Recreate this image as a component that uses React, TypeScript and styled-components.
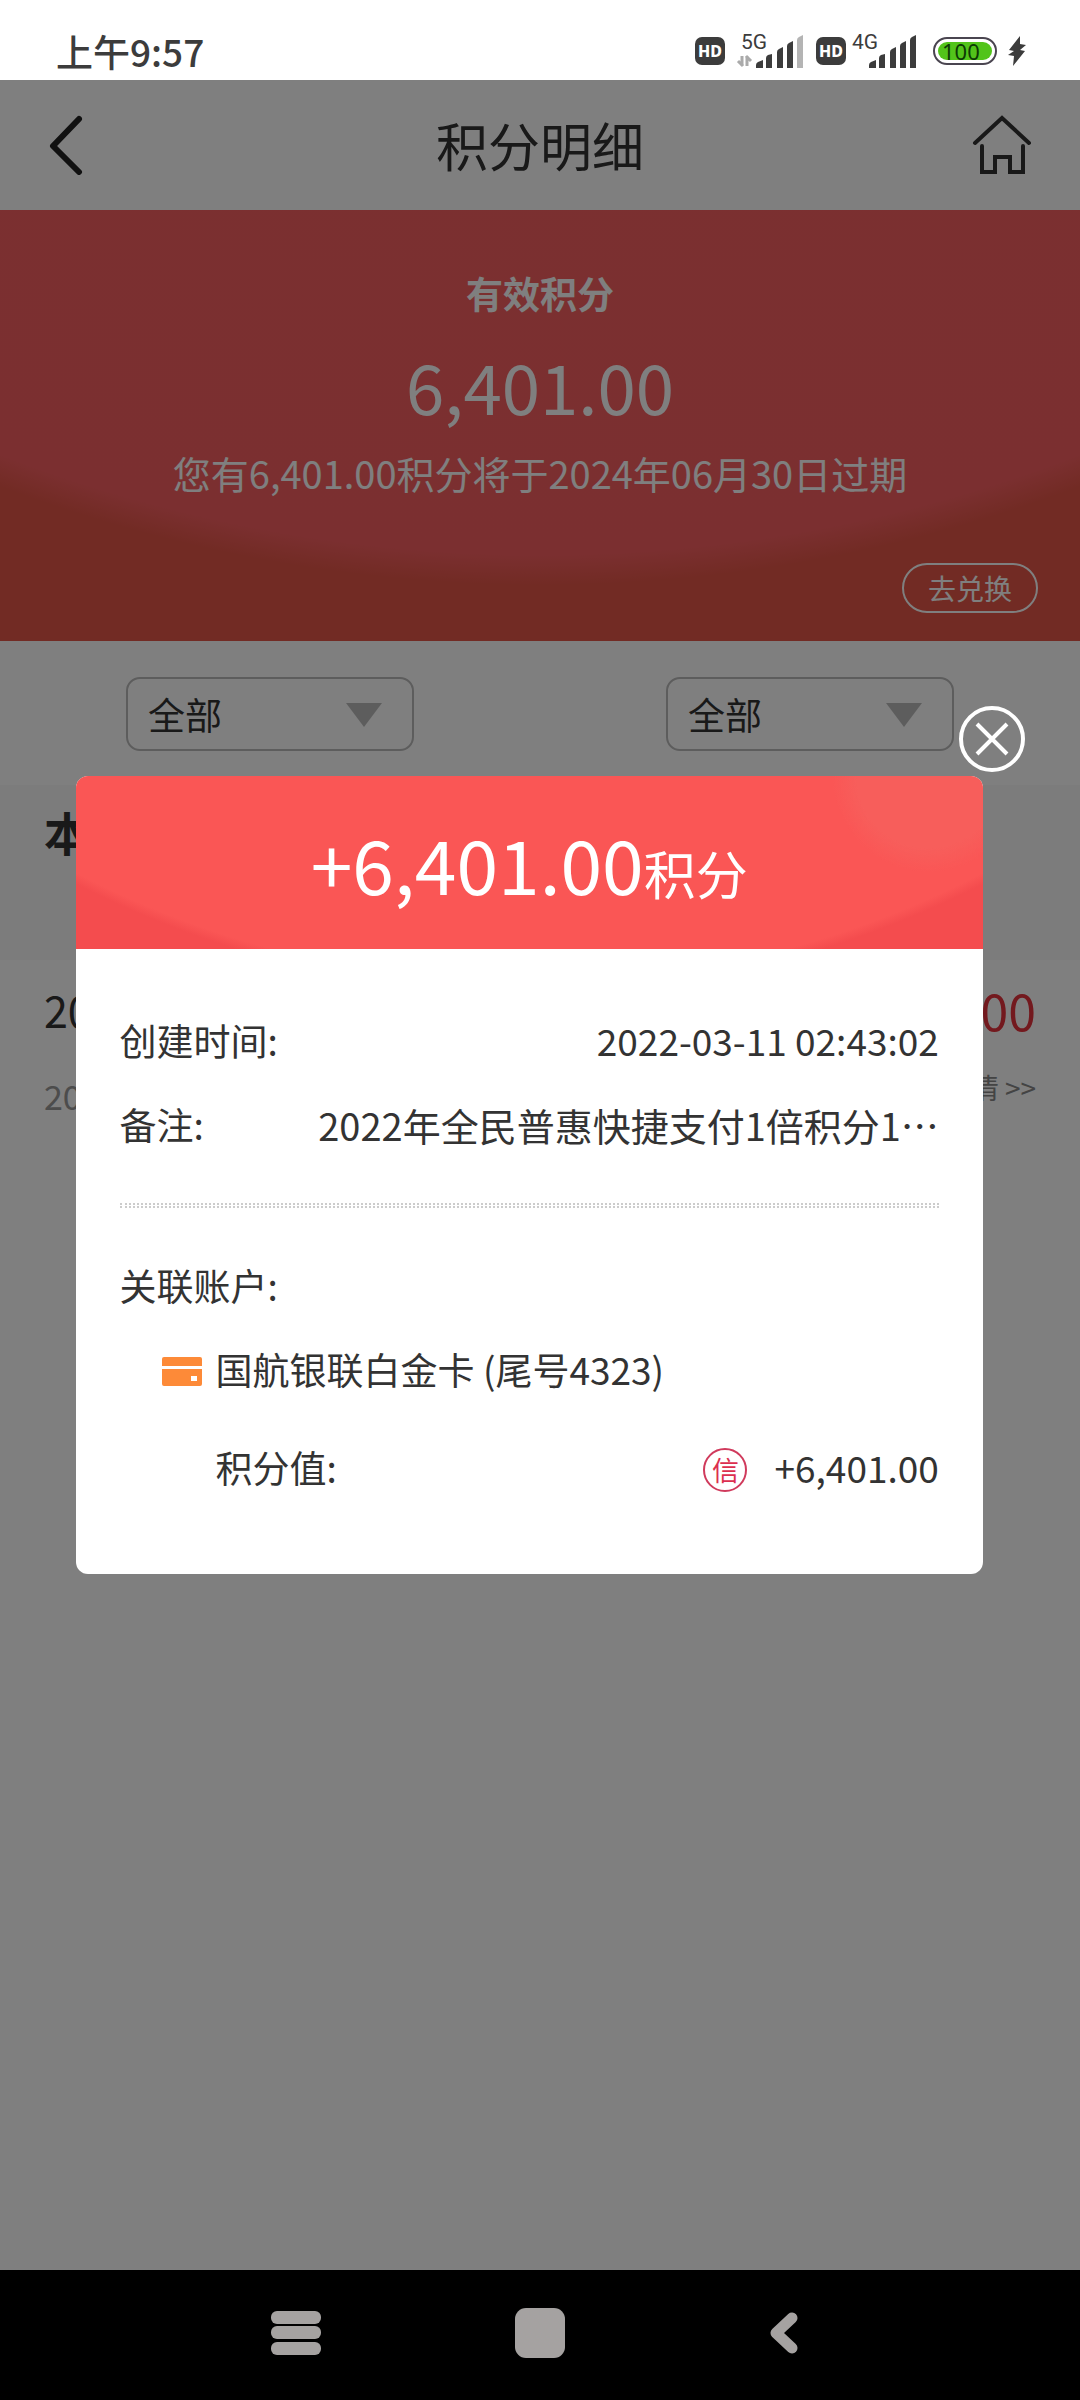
import React from 'react';
import styled, { createGlobalStyle } from 'styled-components';

const GlobalStyle = createGlobalStyle`
  *, *::before, *::after { box-sizing: border-box; }
  body {
    margin: 0;
    background: #000;
    color: #333;
    font-family: "Noto Sans CJK SC", "Noto Sans", sans-serif;
    font-size: 37px;
  }
  h1, h2, p, dl, dd { margin: 0; font-weight: 400; }
  button, select { font-family: inherit; color: inherit; }
  button { padding: 0; border: 0; background: none; }
  svg { display: block; }
`;

const Screen = styled.div`
  display: flex;
  flex-direction: column;
  min-height: 100vh;
`;

/* ---------- system status bar ---------- */

const StatusBar = styled.div`
  display: flex;
  align-items: center;
  justify-content: space-between;
  height: 80px;
  padding: 22px 54px 0 56px;
  background: #fff;
  color: #3c3c3c;
`;

const Clock = styled.time`
  font-weight: 500;
  line-height: 56px;
`;

const StatusIcons = styled.div`
  display: flex;
  align-items: center;
`;

const HdBadge = styled.span`
  display: flex;
  align-items: center;
  justify-content: center;
  width: 30px;
  height: 28px;
  border-radius: 7px;
  background: #3c3c3c;
  color: #fff;
  font: 800 16px/28px "Noto Sans", sans-serif;
`;

const Signal = styled.svg<{ $lead: number }>`
  margin: 0 12px 0 ${(p) => p.$lead}px;
`;

const Battery = styled.span`
  display: flex;
  padding: 3px;
  width: 64px;
  height: 28px;
  margin: 0 11px 0 4px;
  border: 2px solid #4a4550;
  border-radius: 14px;
`;

const Charge = styled.span`
  flex: 1;
  padding-left: 4px;
  border-radius: 9px;
  background: #52c41a;
  color: #0d3a05;
  font: 400 22px/18px "Noto Sans", sans-serif;
`;

function SignalIcon({ label, weakLast }: { label: string; weakLast?: boolean }) {
  return (
    <Signal $lead={weakLast ? 11 : 3} width="68" height="52" viewBox="0 -8 68 52" aria-label={label}>
      <text x={weakLast ? 5 : 3} y="16" fontSize="21" fontFamily="Roboto, sans-serif" fill="#3c3c3c">
        {label}
      </text>
      {weakLast && (
        <path d="M6 23v10M7 33l-5-5M11 33V23M10 23l5 5" stroke="#aaa" strokeWidth="3" fill="none" />
      )}
      <g fill="#3c3c3c">
        <path d="M20 35v-3q0-2 2-3l5-2v8z" />
        <path d="M30 35V25q0-2 2-3l4-1v14z" />
        <path d="M41 35V19q0-2 2-3l4-2v21z" />
        <path d="M51 35V13q0-2 2-3l4-2v27z" />
        <path d="M61 35V7q0-2 2-3l4-2v33z" fill={weakLast ? '#b4b4b4' : '#3c3c3c'} />
      </g>
    </Signal>
  );
}

/* ---------- page ---------- */

const Stage = styled.div`
  position: relative;
  flex: 1;
  background: #fff;
`;

const TopBar = styled.header`
  display: flex;
  align-items: center;
  justify-content: space-between;
  height: 130px;
  padding: 0 48px;
`;

const PageTitle = styled.h1`
  font-size: 52px;
  line-height: 76px;
`;

const IconButton = styled.button<{ $end?: boolean }>`
  display: flex;
  justify-content: ${(p) => (p.$end ? 'flex-end' : 'flex-start')};
  width: 60px;
`;

const Hero = styled.section`
  display: flex;
  flex-direction: column;
  align-items: center;
  padding: 55px 42px 28px;
  background: radial-gradient(circle 1532px at 50% -1156px, #f96264 0, #f65f60 98%, #e45648 100%);
  color: #fff;
`;

const HeroLabel = styled.h2`
  font-size: 37px;
  font-weight: 700;
  line-height: 56px;
`;

const HeroValue = styled.p`
  margin: 14px 0 10px;
  font-size: 69px;
  line-height: 100px;
`;

const HeroNote = styled.p`
  font-size: 38px;
  line-height: 56px;
`;

const RedeemButton = styled.button`
  align-self: flex-end;
  width: 136px;
  height: 50px;
  margin-top: 62px;
  border: 2px solid #fff;
  border-radius: 25px;
  font-size: 28px;
  line-height: 44px;
`;

const Filters = styled.div`
  display: grid;
  grid-template-columns: 1fr 1fr;
  justify-items: center;
  padding: 36px 0 34px;
`;

const FilterBox = styled.label`
  position: relative;
  width: 288px;
`;

const FilterSelect = styled.select`
  width: 100%;
  height: 74px;
  padding: 0 20px;
  border: 2px solid #bbb;
  border-radius: 14px;
  background: transparent;
  font-size: 37px;
  appearance: none;
`;

const Caret = styled.svg`
  position: absolute;
  top: 26px;
  right: 32px;
  pointer-events: none;
`;

const MonthBand = styled.div`
  min-height: 175px;
  padding: 16px 44px;
  background: #f8f8f8;
  font-size: 46px;
  font-weight: 700;
  line-height: 60px;
`;

const Entry = styled.article`
  display: flex;
  justify-content: space-between;
  padding: 19px 44px;
`;

const EntryColumn = styled.div<{ $gap: number }>`
  display: flex;
  flex-direction: column;
  gap: ${(p) => p.$gap}px;
`;

const EntryTitle = styled.p`
  font-size: 43px;
  line-height: 60px;
`;

const EntryDate = styled.time`
  color: #999;
  font-size: 34px;
  line-height: 48px;
`;

const EntryAmount = styled.p`
  color: #e6323c;
  font-size: 50px;
  line-height: 60px;
  text-align: right;
`;

const EntryLink = styled.a`
  color: #888;
  font-size: 28px;
  line-height: 48px;
  text-align: right;
  text-decoration: none;
`;

/* ---------- dialog ---------- */

const Overlay = styled.div`
  position: absolute;
  inset: 0;
  display: flex;
  align-items: center;
  padding: 0 9% 0 7%;
  background: rgba(0, 0, 0, 0.5);
`;

const Dialog = styled.section`
  position: relative;
  width: 100%;
  border-radius: 12px;
  background: #fff;
`;

const DialogHead = styled.header`
  display: flex;
  align-items: baseline;
  justify-content: center;
  height: 173px;
  padding-top: 32px;
  border-radius: 12px 12px 0 0;
  background:
    radial-gradient(circle 96px at 94% 0, #f75e5b 0, #f75e5b 75%, transparent 100%),
    radial-gradient(circle 998px at 50% -781px, #fa5655 0, #fa5655 99%, #f44c4e 100%);
  color: #fff;
`;

const DialogValue = styled.span`
  font-size: 75px;
  line-height: 110px;
`;

const DialogUnit = styled.span`
  font-size: 52px;
`;

const CloseButton = styled.button`
  position: absolute;
  top: -72px;
  right: -44px;
`;

const DialogBody = styled.div`
  padding: 49px 44px 51px;
`;

const Row = styled.div<{ $indent?: number; $height?: number }>`
  display: flex;
  align-items: center;
  justify-content: space-between;
  height: ${(p) => p.$height ?? 84}px;
  padding-left: ${(p) => p.$indent ?? 0}px;
`;

const Remark = styled.dd`
  font-size: 38px;
`;

const Divider = styled.hr`
  height: 5px;
  margin: 37px 0 35px;
  border: 0;
  border-top: 2px dotted #ccc;
  border-bottom: 2px dotted #ccc;
`;

const CardLine = styled.span`
  display: flex;
  align-items: center;
  gap: 14px;
`;

const CardIcon = styled.svg`
  margin-top: 5px;
`;

const PointValue = styled.dd`
  display: flex;
  align-items: center;
  gap: 27px;
`;

const CreditMark = styled.span`
  display: flex;
  align-items: center;
  justify-content: center;
  width: 44px;
  height: 44px;
  margin-top: 5px;
  border: 2px solid #d03a5c;
  border-radius: 50%;
  color: #dc2f4f;
  font-size: 27px;
  line-height: 38px;
`;

/* ---------- system navigation ---------- */

const NavBar = styled.nav`
  display: flex;
  align-items: center;
  justify-content: center;
  gap: 184px;
  height: 130px;
  padding-bottom: 4px;
  background: #000;
`;

const NavButton = styled.button`
  display: flex;
  justify-content: center;
  width: 60px;
`;

function Filter({ label }: { label: string }) {
  return (
    <FilterBox>
      <FilterSelect aria-label={label} defaultValue="all">
        <option value="all">全部</option>
      </FilterSelect>
      <Caret width="36" height="24" viewBox="0 0 36 24">
        <path d="M0 0h36L18 24z" fill="#bbb" />
      </Caret>
    </FilterBox>
  );
}

export default function App() {
  return (
    <Screen>
      <GlobalStyle />
      <StatusBar>
        <Clock>上午9:57</Clock>
        <StatusIcons>
          <HdBadge>HD</HdBadge>
          <SignalIcon label="5G" weakLast />
          <HdBadge>HD</HdBadge>
          <SignalIcon label="4G" />
          <Battery>
            <Charge>100</Charge>
          </Battery>
          <svg width="18" height="30" viewBox="0 0 18 30">
            <path d="M12 0L1 14l5 1-6 4 6 1-1 10L17 15l-5-1 6-5-6-1z" fill="#3c3c3c" />
          </svg>
        </StatusIcons>
      </StatusBar>

      <Stage>
        <TopBar>
          <IconButton aria-label="返回">
            <svg width="36" height="60" viewBox="0 0 36 60" fill="none" stroke="#222" strokeWidth="6" strokeLinecap="round" strokeLinejoin="round">
              <path d="M31 4L5 31l26 26" />
            </svg>
          </IconButton>
          <PageTitle>积分明细</PageTitle>
          <IconButton $end aria-label="首页">
            <svg width="60" height="60" viewBox="0 0 60 60" fill="none" stroke="#333" strokeWidth="4" strokeLinecap="round">
              <path d="M3 28L30 3l27 25" />
              <path d="M10 31v26h13V42h15v15h13V31" />
            </svg>
          </IconButton>
        </TopBar>

        <Hero>
          <HeroLabel>有效积分</HeroLabel>
          <HeroValue>6,401.00</HeroValue>
          <HeroNote>您有6,401.00积分将于2024年06月30日过期</HeroNote>
          <RedeemButton>去兑换</RedeemButton>
        </Hero>

        <Filters>
          <Filter label="账户" />
          <Filter label="类型" />
        </Filters>

        <MonthBand>本</MonthBand>
        <Entry>
          <EntryColumn $gap={33}>
            <EntryTitle>20</EntryTitle>
            <EntryDate>20</EntryDate>
          </EntryColumn>
          <EntryColumn $gap={24}>
            <EntryAmount>00</EntryAmount>
            <EntryLink href="#detail">情 &gt;&gt;</EntryLink>
          </EntryColumn>
        </Entry>

        <Overlay>
          <Dialog role="dialog" aria-modal="true">
            <CloseButton aria-label="关闭">
              <svg width="70" height="70" viewBox="0 0 70 70" fill="none" stroke="#fff" strokeWidth="4">
                <circle cx="35" cy="35" r="31" />
                <path d="M20 20l30 30M50 20L20 50" />
              </svg>
            </CloseButton>
            <DialogHead>
              <DialogValue>+6,401.00</DialogValue>
              <DialogUnit>积分</DialogUnit>
            </DialogHead>
            <DialogBody>
              <dl>
                <Row>
                  <dt>创建时间:</dt>
                  <dd>2022-03-11 02:43:02</dd>
                </Row>
                <Row>
                  <dt>备注:</dt>
                  <Remark>2022年全民普惠快捷支付1倍积分1…</Remark>
                </Row>
              </dl>
              <Divider />
              <Row>关联账户:</Row>
              <Row $indent={42}>
                <CardLine>
                  <CardIcon width="40" height="30" viewBox="0 0 40 30">
                    <path d="M2 0h36q2 0 2 2v7H0V2q0-2 2-2z" fill="#fd8a38" />
                    <path fillRule="evenodd" d="M0 12h40v15q0 2-2 2H2q-2 0-2-2zM29 19v5h6v-5z" fill="#fd8a38" />
                  </CardIcon>
                  国航银联白金卡 (尾号4323)
                </CardLine>
              </Row>
              <dl>
                <Row $indent={96} $height={112}>
                  <dt>积分值:</dt>
                  <PointValue>
                    <CreditMark>信</CreditMark>
                    +6,401.00
                  </PointValue>
                </Row>
              </dl>
            </DialogBody>
          </Dialog>
        </Overlay>
      </Stage>

      <NavBar>
        <NavButton aria-label="最近任务">
          <svg width="50" height="44" viewBox="0 0 50 44" fill="#a5a2a1">
            <rect width="50" height="13" rx="6" />
            <rect y="15" width="50" height="13" rx="6" />
            <rect y="31" width="50" height="13" rx="6" />
          </svg>
        </NavButton>
        <NavButton aria-label="主屏幕">
          <svg width="50" height="50" viewBox="0 0 50 50" fill="#a5a2a1">
            <rect width="50" height="50" rx="11" />
          </svg>
        </NavButton>
        <NavButton aria-label="后退">
          <svg width="30" height="44" viewBox="0 0 30 44" fill="none" stroke="#a5a2a1" strokeWidth="11" strokeLinecap="round" strokeLinejoin="round">
            <path d="M23 7L7 22l16 15" />
          </svg>
        </NavButton>
      </NavBar>
    </Screen>
  );
}
